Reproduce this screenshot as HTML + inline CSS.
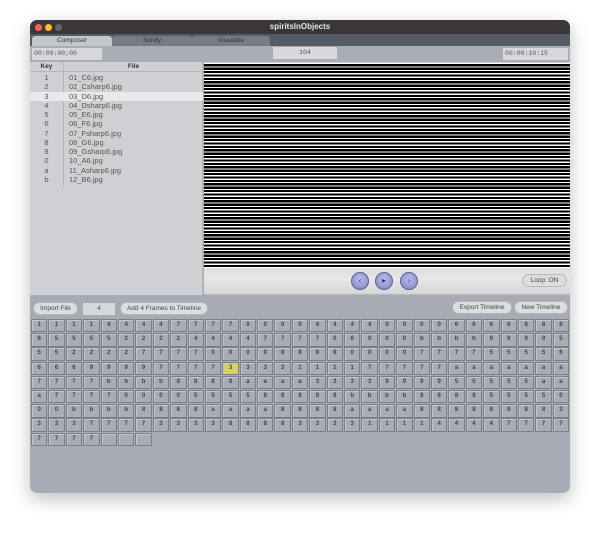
<!DOCTYPE html>
<html><head><meta charset="utf-8"><style>
*{margin:0;padding:0;box-sizing:border-box}
body{width:600px;height:533px;background:#fff;position:relative;overflow:hidden;font-family:"Liberation Sans",sans-serif}
.win{position:absolute;left:30px;top:20px;width:540px;height:473px;border-radius:7px;background:#a7abb4;box-shadow:0 6px 18px rgba(0,0,0,.25);overflow:hidden}
.title{position:absolute;left:0;top:0;width:540px;height:14px;background:#3b3739;color:#e6e6e6;font-size:8px;font-weight:bold;text-align:center;line-height:14px}
.dot{position:absolute;top:4px;width:7px;height:7px;border-radius:50%}
.tabs{position:absolute;left:0;top:14px;width:540px;height:12px;background:#565c65}
.tab{position:absolute;top:2px;height:10px;font-size:6.5px;text-align:center;line-height:10px;color:#333;background:#777c84;border-radius:3px 3px 0 0}
.timebar{position:absolute;left:0;top:26px;width:540px;height:16px;background:#a9adb5}
.fld{position:absolute;height:12px;background:#d6d8dc;font-family:"Liberation Mono",monospace;font-size:6.5px;line-height:12px;color:#555}
.list{position:absolute;left:0;top:42px;width:173px;height:233px;background:#cfd0d4;border-right:1px solid #b7b9be}
.hdr{position:absolute;left:0;top:0;width:173px;height:10px;border-bottom:1px solid #b3b5ba;font-size:6.5px;line-height:10px;font-weight:bold;color:#333}
.row{position:absolute;left:0;width:173px;height:9.25px;font-size:7.5px;line-height:9.25px;color:#555}
.row .k{position:absolute;left:0;width:33px;text-align:center}
.row .f{position:absolute;left:39px}
.vsep{position:absolute;left:33px;top:0;width:1px;height:124px;background:#b3b5ba}
.video{position:absolute;left:174px;top:42px;width:366px;height:206px;background:repeating-linear-gradient(#fff 0,#fff 1.2px,#000 1.2px,#000 3.4px);border-top:1px solid #ccc}
.marble{position:absolute;left:174px;top:248px;width:366px;height:27px;background:linear-gradient(180deg,#dcdcdc,#e8e8e8 40%,#d6d6d6);border-bottom:1px solid #bbb}
.cb{position:absolute;top:252px;width:18px;height:18px;border-radius:50%;background:radial-gradient(circle at 50% 40%,#b8bde6,#7d84c4);border:1px solid #5b6098;color:#2d3380;font-size:8px;text-align:center;line-height:16px}
.btn{position:absolute;height:13px;border-radius:7px;background:#dcdde0;border:1px solid #b5b7bc;font-size:6.5px;line-height:11px;text-align:center;color:#444}
.grid{position:absolute;left:1px;top:299px;display:grid;grid-template-columns:repeat(31,17.4px);grid-auto-rows:14.2px}
.c{width:16.4px;height:13.4px;border:1px solid #7b7f88;background:#a9acb5;box-shadow:inset 1px 1px 0 #c3c6cc;font-size:6px;line-height:11.4px;text-align:center;color:#444;font-weight:bold}
.c.y{background:#d4d45e}
</style></head><body>
<div class="win">
<div class="title">spiritsInObjects</div>
<div class="dot" style="left:5px;background:#fe5f57"></div>
<div class="dot" style="left:15px;background:#febc2e"></div>
<div class="dot" style="left:25px;background:#666"></div>
<div class="tabs">
<div class="tab" style="left:2px;width:80px;background:#c3c6cb">Composer</div>
<div class="tab" style="left:82px;width:80px">Sonify</div>
<div class="tab" style="left:162px;width:78px">Visualize</div>
</div>
<div class="timebar">
<div class="fld" style="left:2px;top:2px;width:70px;padding-left:2px">00:00:00;00</div>
<div class="fld" style="left:243px;top:1px;width:64px;text-align:center">104</div>
<div class="fld" style="left:473px;top:2px;width:65px;padding-left:2px">00:00:10:15</div>
</div>
<div class="list">
<div class="hdr"><span style="position:absolute;left:0;width:33px;text-align:center">Key</span><span style="position:absolute;left:34px;width:139px;text-align:center">File</span></div>
<div class="vsep"></div>
<div class="row" style="top:11px"><span class="k">1</span><span class="f">01_C6.jpg</span></div>
<div class="row" style="top:20.25px"><span class="k">2</span><span class="f">02_Csharp6.jpg</span></div>
<div class="row" style="top:29.5px;background:#e8e9eb"><span class="k">3</span><span class="f">03_D6.jpg</span></div>
<div class="row" style="top:38.75px"><span class="k">4</span><span class="f">04_Dsharp6.jpg</span></div>
<div class="row" style="top:48px"><span class="k">5</span><span class="f">05_E6.jpg</span></div>
<div class="row" style="top:57.25px"><span class="k">6</span><span class="f">06_F6.jpg</span></div>
<div class="row" style="top:66.5px"><span class="k">7</span><span class="f">07_Fsharp6.jpg</span></div>
<div class="row" style="top:75.75px"><span class="k">8</span><span class="f">08_G6.jpg</span></div>
<div class="row" style="top:85px"><span class="k">9</span><span class="f">09_Gsharp6.jpg</span></div>
<div class="row" style="top:94.25px"><span class="k">0</span><span class="f">10_A6.jpg</span></div>
<div class="row" style="top:103.5px"><span class="k">a</span><span class="f">11_Asharp6.jpg</span></div>
<div class="row" style="top:112.75px"><span class="k">b</span><span class="f">12_B6.jpg</span></div>
</div>
<div class="video"></div>
<div class="marble"></div>
<div class="cb" style="left:321px">&#8249;</div>
<div class="cb" style="left:345px">&#9656;</div>
<div class="cb" style="left:370px">&#8250;</div>
<div class="btn" style="left:492px;top:254px;width:45px">Loop: ON</div>
<div class="btn" style="left:3px;top:282px;width:45px">Import File</div>
<div class="fld" style="left:53px;top:283px;width:32px;text-align:center;font-family:'Liberation Sans',sans-serif">4</div>
<div class="btn" style="left:90px;top:282px;width:88px">Add 4 Frames to Timeline</div>
<div class="btn" style="left:422px;top:281px;width:60px">Export Timeline</div>
<div class="btn" style="left:484px;top:281px;width:54px">New Timeline</div>
<div class="grid" id="g"></div>
</div>
<script>
var r=["1111444477770000444400006666888","8555522224444777700000bbbb99995","5522227777000088880000777755556","666999977773333111177777aaaaaaaa","7777bbbb8888aaaa3333999955555aaa","a77770000555588888bbbb888855550","00bbbb8888aaaa8888aaaa888888883","3337777333388883333111144447777","7777"];
var h="";
for(var i=0;i<r.length;i++){var s=r[i].slice(0,31);for(var j=0;j<s.length;j++){h+='<div class="c'+(i==3&&j==11?' y':'')+'">'+s[j]+'</div>';}}
h+='<div class="c"></div><div class="c"></div><div class="c"></div>';
document.getElementById("g").innerHTML=h;
</script>
</body></html>
